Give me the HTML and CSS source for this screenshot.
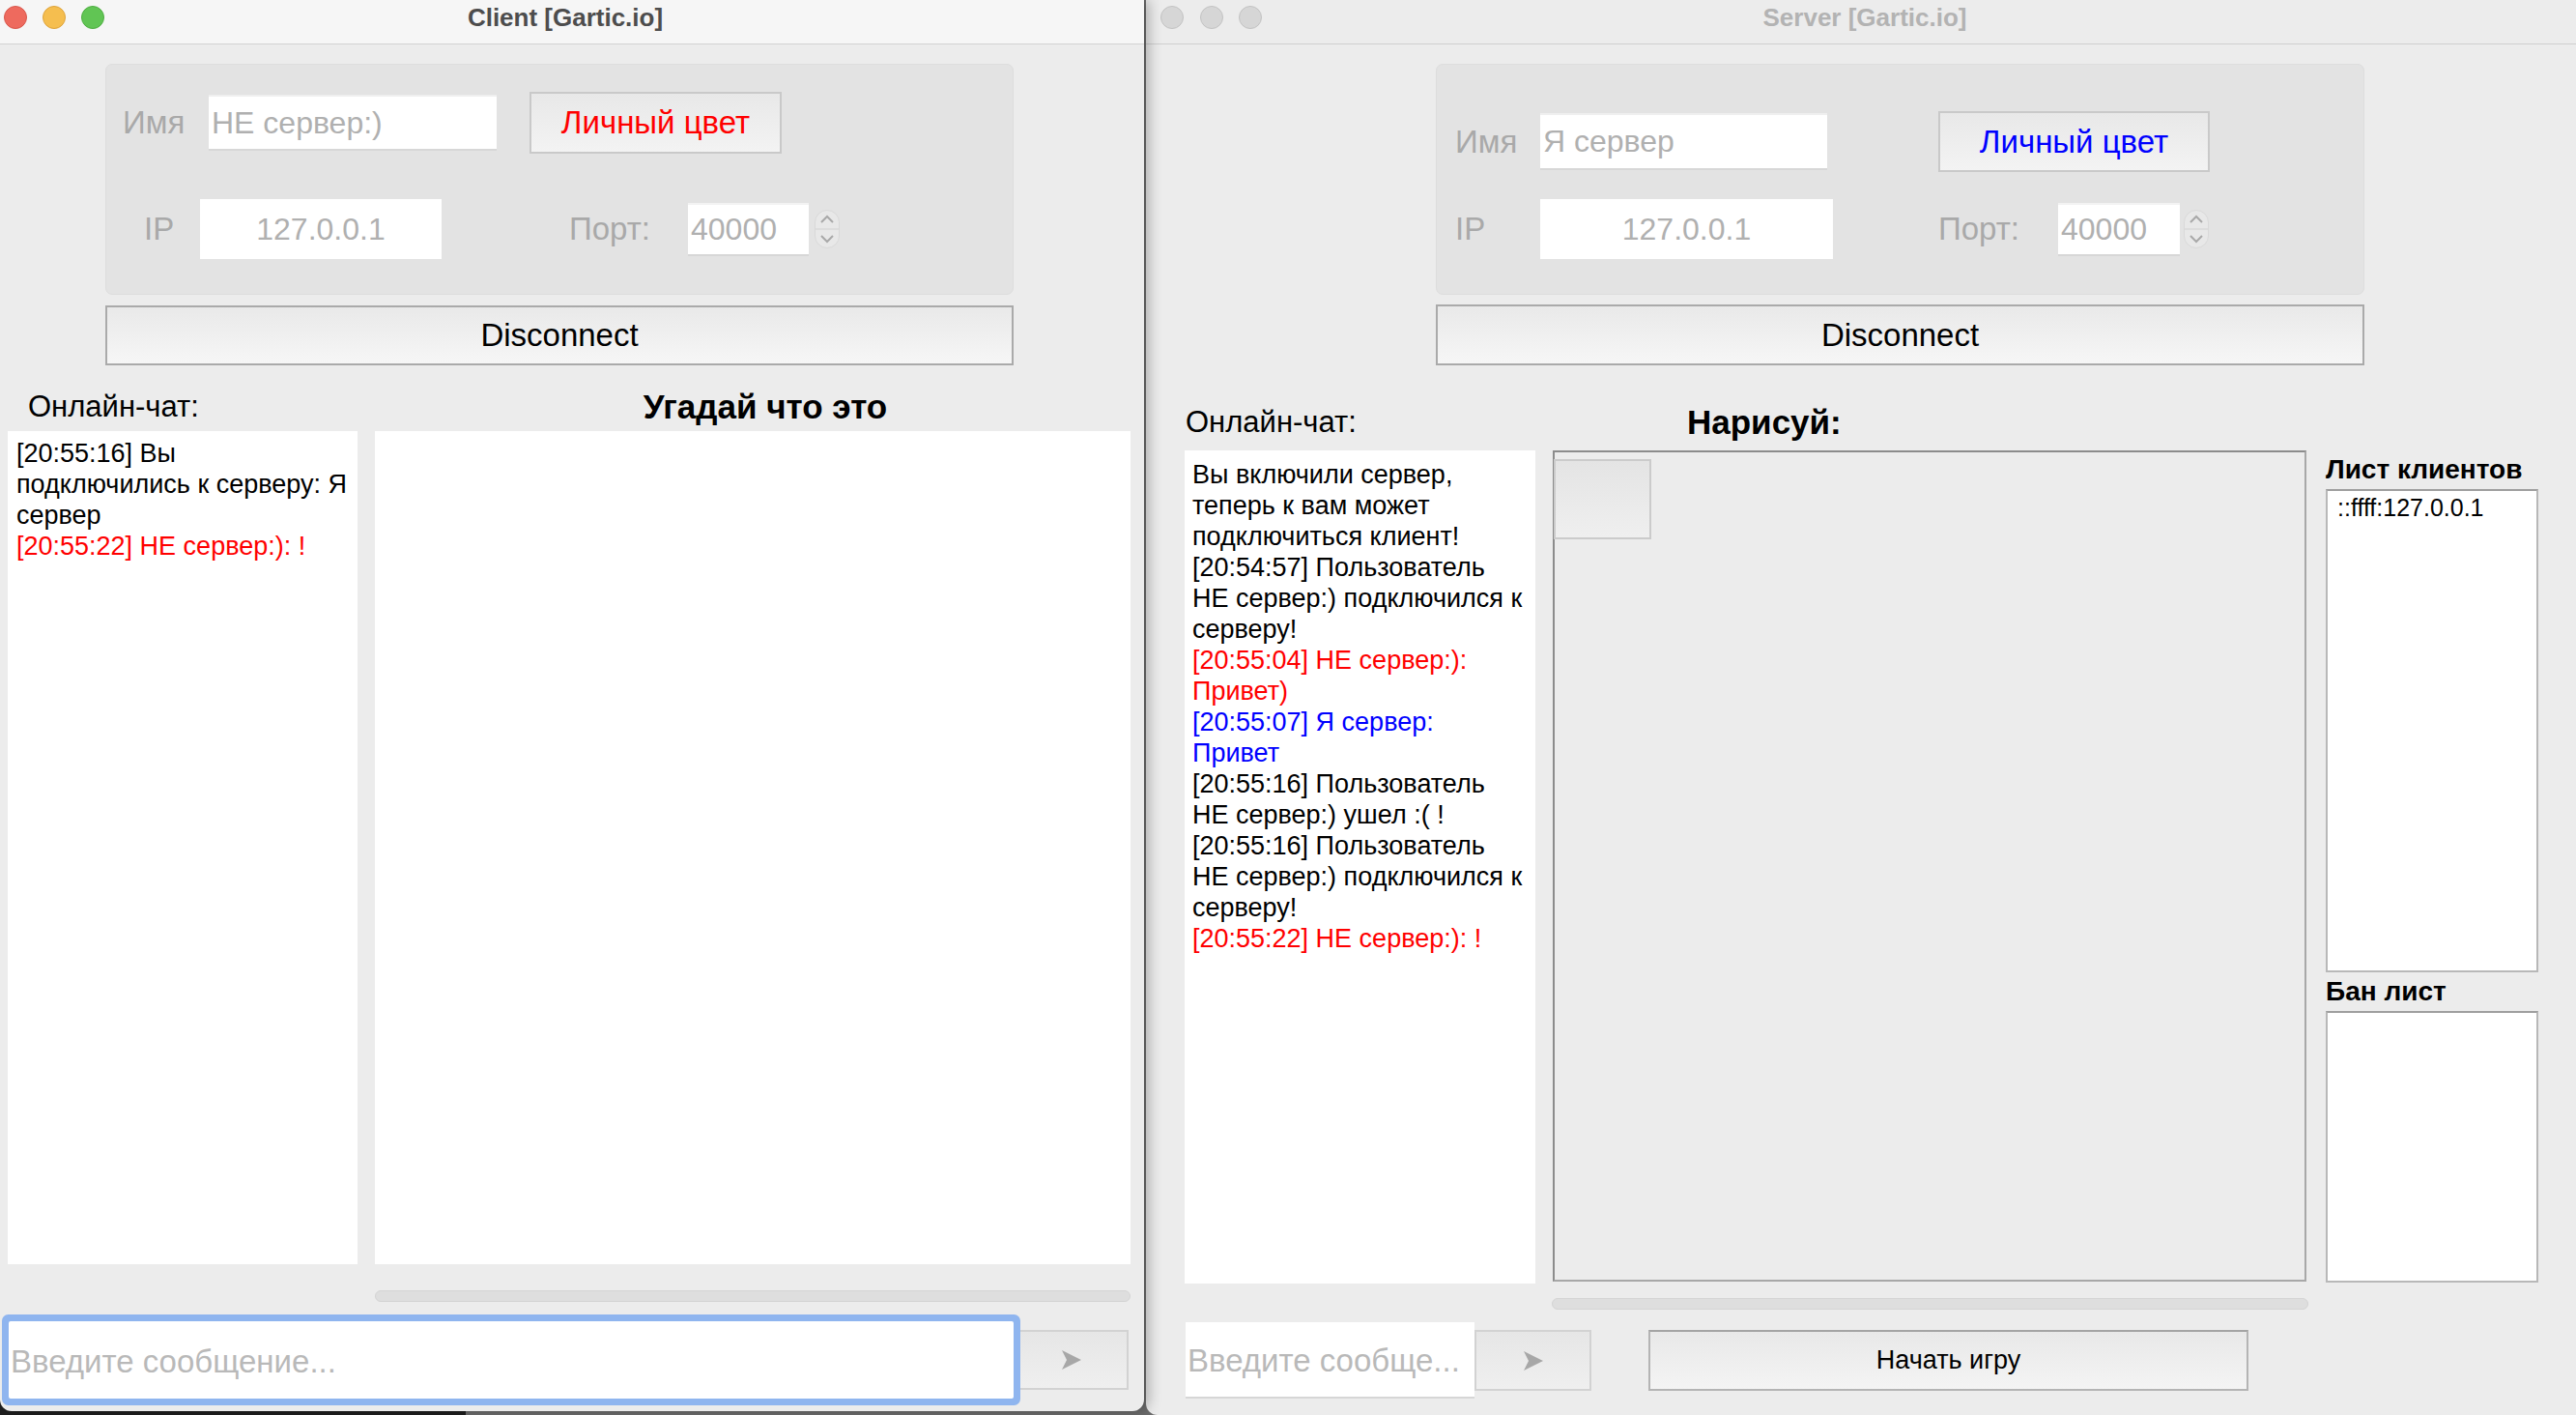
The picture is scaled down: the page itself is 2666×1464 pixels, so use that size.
FILE: index.html
```html
<!DOCTYPE html>
<html lang="ru">
<head>
<meta charset="utf-8">
<title>Gartic.io</title>
<link rel="stylesheet" href="styles.css">
</head>
<body>
<div class="desk">
  <div class="win win-client">
    <div class="titlebar active">
      <div class="lights client-lights"><span class="light red"></span><span class="light yellow"></span><span class="light green"></span></div>
      <div class="title client-title">Client [Gartic.io]</div>
    </div>
    <div class="settings c-settings">
      <div class="srow c-row1">
        <span class="lbl c-lbl1">Имя</span>
        <div class="field name-field c-name">НЕ сервер:)</div>
        <div class="btn color-btn c-color red-text">Личный цвет</div>
      </div>
      <div class="srow c-row2">
        <span class="lbl c-lbl-ip">IP</span>
        <div class="field ip-field c-ip">127.0.0.1</div>
        <span class="lbl c-lbl-port">Порт:</span>
        <div class="field port-field c-port">40000</div>
        <svg class="spin c-spin" width="26" height="40" viewBox="0 0 26 40"><rect x="0.5" y="0.5" width="25" height="39" rx="12.5" fill="#e8e8e8" stroke="#d9d9d9"/><line x1="1" y1="20" x2="25" y2="20" stroke="#d2d2d2"/><path d="M7 13 L13 7 L19 13" fill="none" stroke="#a9a9a9" stroke-width="2"/><path d="M7 27 L13 33 L19 27" fill="none" stroke="#a9a9a9" stroke-width="2"/></svg>
      </div>
    </div>
    <div class="btn disc c-disc">Disconnect</div>
    <div class="heads c-heads">
      <div class="h-chat c-hchat">Онлайн-чат:</div>
      <div class="h-draw c-hdraw">Угадай что это</div>
    </div>
    <div class="panes c-panes">
      <div class="chat c-chat">
        <div>[20:55:16] Вы<br>подключились к серверу: Я<br>сервер</div>
        <div class="red-text">[20:55:22] НЕ сервер:): !</div>
      </div>
      <div class="board"></div>
    </div>
    <div class="hscroll c-hscroll"></div>
    <div class="sendrow c-sendrow">
      <div class="msg c-msg">Введите сообщение...</div>
      <div class="btn send c-send"><svg width="22" height="22" viewBox="0 0 22 22"><path d="M1 1 L21 11 L1 21 L6 11 Z" fill="#a7a7a7"/></svg></div>
    </div>
  </div>

  <div class="win win-server">
    <div class="titlebar inactive">
      <div class="lights server-lights"><span class="light grey"></span><span class="light grey"></span><span class="light grey"></span></div>
      <div class="title server-title">Server [Gartic.io]</div>
    </div>
    <div class="settings s-settings">
      <div class="srow s-row1">
        <span class="lbl s-lbl">Имя</span>
        <div class="field name-field s-name">Я сервер</div>
        <div class="btn color-btn s-color blue-text">Личный цвет</div>
      </div>
      <div class="srow s-row2">
        <span class="lbl s-lbl">IP</span>
        <div class="field ip-field s-ip">127.0.0.1</div>
        <span class="lbl s-lbl-port">Порт:</span>
        <div class="field port-field s-port">40000</div>
        <svg class="spin s-spin" width="26" height="40" viewBox="0 0 26 40"><rect x="0.5" y="0.5" width="25" height="39" rx="12.5" fill="#e8e8e8" stroke="#d9d9d9"/><line x1="1" y1="20" x2="25" y2="20" stroke="#d2d2d2"/><path d="M7 13 L13 7 L19 13" fill="none" stroke="#a9a9a9" stroke-width="2"/><path d="M7 27 L13 33 L19 27" fill="none" stroke="#a9a9a9" stroke-width="2"/></svg>
      </div>
    </div>
    <div class="btn disc s-disc">Disconnect</div>
    <div class="heads s-heads">
      <div class="h-chat s-hchat">Онлайн-чат:</div>
      <div class="h-draw s-hdraw">Нарисуй:</div>
    </div>
    <div class="panes s-panes">
      <div class="chat s-chat">
        <div>Вы включили сервер,<br>теперь к вам может<br>подключиться клиент!</div>
        <div>[20:54:57] Пользователь<br>НЕ сервер:) подключился к<br>серверу!</div>
        <div class="red-text">[20:55:04] НЕ сервер:):<br>Привет)</div>
        <div class="blue-text">[20:55:07] Я сервер:<br>Привет</div>
        <div>[20:55:16] Пользователь<br>НЕ сервер:) ушел :( !</div>
        <div>[20:55:16] Пользователь<br>НЕ сервер:) подключился к<br>серверу!</div>
        <div class="red-text">[20:55:22] НЕ сервер:): !</div>
      </div>
      <div class="canvas">
        <div class="tool-btn"></div>
      </div>
      <div class="lists">
        <div class="list-h">Лист клиентов</div>
        <div class="listbox clients">
          <div class="list-item">::ffff:127.0.0.1</div>
        </div>
        <div class="list-h">Бан лист</div>
        <div class="listbox bans"></div>
      </div>
    </div>
    <div class="hscroll s-hscroll"></div>
    <div class="sendrow s-sendrow">
      <div class="msg s-msg">Введите сообще...</div>
      <div class="btn send s-send"><svg width="22" height="22" viewBox="0 0 22 22"><path d="M1 1 L21 11 L1 21 L6 11 Z" fill="#a7a7a7"/></svg></div>
      <div class="btn start">Начать игру</div>
    </div>
  </div>
</div>
</body>
</html>
```
FILE: styles.css
```css
* { box-sizing: border-box; margin: 0; padding: 0; }

html, body { width: 2666px; height: 1464px; overflow: hidden; }

body {
  font-family: "Liberation Sans", Arial, Helvetica, sans-serif;
  color: #000;
  background: linear-gradient(to right, #1f1f1f 0, #1f1f1f 482px, #6c6c6c 482px);
}

.desk { display: flex; height: 1464px; }

.win {
  display: flex;
  flex-direction: column;
  background: #ececec;
  overflow: hidden;
  flex-shrink: 0;
}

.win-client {
  width: 1184px;
  height: 1460px;
  border-radius: 0 0 12px 12px;
  position: relative;
  z-index: 2;
  box-shadow: 5px 0 14px rgba(0, 0, 0, 0.28);
}

.win-server {
  width: 1480px;
  height: 1464px;
  margin-left: 2px;
  border-radius: 0 0 0 12px;
}

/* title bar */
.titlebar {
  height: 46px;
  flex-shrink: 0;
  display: grid;
  align-items: center;
  padding-bottom: 9px;
  border-bottom: 1px solid #d3d3d3;
}
.titlebar > * { grid-area: 1 / 1; }
.active { background: #f6f6f6; }
.inactive { background: #ececec; border-bottom-color: #cfcfcf; }

.lights { display: flex; gap: 16px; justify-self: start; }
.client-lights { padding-left: 4px; }
.server-lights { padding-left: 15px; gap: 16.5px; }
.light { width: 24px; height: 24px; border-radius: 50%; display: block; }
.red { background: #ee6a5e; border: 1px solid #d9574c; }
.yellow { background: #f5be4f; border: 1px solid #dea33a; }
.green { background: #61c554; border: 1px solid #4eae41; }
.grey { background: #d6d6d6; border: 1px solid #c3c3c3; }

.title { justify-self: center; font-size: 26px; font-weight: bold; }
.client-title { color: #4d4d4d; padding-right: 14px; }
.server-title { color: #b3b3b3; padding-left: 8px; }

/* settings group */
.settings {
  background: #e3e3e3;
  border: 1px solid #dddddd;
  border-radius: 7px;
  margin-top: 20px;
  height: 239px;
  flex-shrink: 0;
}
.c-settings { margin-left: 109px; width: 940px; padding-top: 28px; }
.s-settings { margin-left: 300px; width: 961px; padding-top: 48px; }

.srow { display: flex; align-items: center; }
.c-row1 { height: 64px; padding-left: 17px; }
.c-row2 { height: 62px; margin-top: 47px; padding-left: 39px; }
.s-row1 { height: 63px; padding-left: 19px; }
.s-row2 { height: 62px; margin-top: 28px; padding-left: 19px; }

.lbl { font-size: 33px; color: #a9a9a9; flex-shrink: 0; }
.c-lbl1 { width: 89px; }
.c-lbl-ip { width: 58px; }
.c-lbl-port { width: 123px; margin-left: 132px; }
.s-lbl { width: 88px; }
.s-lbl-port { width: 124px; margin-left: 109px; }

.field {
  background: #fff;
  font-size: 32px;
  color: #b0b0b0;
  display: flex;
  align-items: center;
  flex-shrink: 0;
}
.name-field {
  height: 58px;
  padding-left: 3px;
  border-top: 2px solid #efefef;
  border-bottom: 2px solid #d7d7d7;
}
.c-name { width: 298px; }
.s-name { width: 297px; height: 59px; }
.ip-field { height: 62px; justify-content: center; }
.c-ip { width: 250px; }
.s-ip { width: 303px; }
.port-field {
  height: 55px;
  padding-left: 3px;
  border-bottom: 2px solid #d7d7d7;
  border-top: 2px solid #f3f3f3;
}
.c-port { width: 125px; }
.s-port { width: 126px; }
.spin { flex-shrink: 0; display: block; }
.c-spin { margin-left: 6px; }
.s-spin { margin-left: 4px; }

.btn {
  display: flex;
  align-items: center;
  justify-content: center;
  background: linear-gradient(#e8e8e8, #f3f3f3);
  border: 2px solid #c9c9c9;
  flex-shrink: 0;
}
.color-btn { font-size: 33px; }
.c-color { width: 261px; height: 64px; margin-left: 34px; }
.s-color { width: 281px; height: 63px; margin-left: 115px; }
.red-text { color: #ff0000; }
.blue-text { color: #0000ff; }

.disc {
  height: 62px;
  font-size: 33px;
  border: 2px solid #aaaaaa;
  background: linear-gradient(#e9e9e9, #f6f6f6);
}
.c-disc { margin-top: 11px; margin-left: 109px; width: 940px; }
.s-disc { margin-top: 10px; margin-left: 300px; width: 961px; height: 63px; }

/* headings */
.heads { display: flex; line-height: 50px; flex-shrink: 0; }
.c-heads { height: 68px; padding-top: 18px; }
.s-heads { height: 88px; padding-top: 34px; }
.h-chat { font-size: 31px; flex-shrink: 0; }
.h-draw { font-size: 35px; font-weight: bold; }
.c-hchat { width: 388px; padding-left: 29px; }
.c-hdraw { width: 782px; text-align: center; padding-left: 26px; }
.s-hchat { width: 560px; padding-left: 41px; }

/* panes */
.panes { display: flex; flex-shrink: 0; }
.c-panes { height: 862px; padding-left: 8px; gap: 18px; }
.s-panes { height: 862px; padding-left: 40px; }

.chat {
  background: #fff;
  font-size: 27px;
  line-height: 32px;
  white-space: nowrap;
  padding: 7px 9px;
  flex-shrink: 0;
}
.c-chat { width: 362px; }
.s-chat { width: 363px; padding-left: 8px; padding-top: 9px; }

.board { background: #fff; width: 782px; }

.canvas {
  width: 780px;
  height: 860px;
  margin-left: 18px;
  border: 2px solid #a8a8a8;
  border-top-color: #8c8c8c;
  border-left-color: #8c8c8c;
  background: #ececec;
  padding-top: 7px;
  flex-shrink: 0;
}
.tool-btn {
  width: 101px;
  height: 83px;
  margin-left: -1px;
  border: 2px solid #cbcbcb;
  background: linear-gradient(#e4e4e4, #efefef);
}

.lists { width: 220px; margin-left: 20px; display: flex; flex-direction: column; }
.list-h { height: 40px; line-height: 40px; font-size: 28px; font-weight: bold; }
.listbox {
  background: #fff;
  border: 2px solid #b8b8b8;
  border-top-color: #9f9f9f;
}
.clients { height: 500px; }
.bans { height: 281px; }
.list-item { font-size: 25px; line-height: 28px; padding: 3px 0 0 10px; }

/* scroll bars */
.hscroll {
  height: 12px;
  border-radius: 6px;
  background: #dedede;
  border: 1px solid #d4d4d4;
  flex-shrink: 0;
}
.c-hscroll { margin-top: 27px; margin-left: 388px; width: 782px; }
.s-hscroll { margin-top: 15px; margin-left: 420px; width: 783px; }

/* send row */
.sendrow { display: flex; align-items: center; flex-shrink: 0; }
.c-sendrow { margin-top: 20px; height: 80px; padding-left: 9px; }
.s-sendrow { margin-top: 13px; height: 79px; padding-left: 41px; }

.msg {
  background: #fff;
  font-size: 33px;
  color: #b9b9b9;
  display: flex;
  align-items: center;
  flex-shrink: 0;
}
.c-msg {
  width: 1040px;
  height: 80px;
  padding-left: 2px;
  padding-top: 4px;
  position: relative;
  z-index: 1;
  border-radius: 2px;
  box-shadow: 0 0 0 7px #8fb5ef;
}
.s-msg {
  width: 299px;
  height: 79px;
  padding-left: 2px;
  padding-top: 2px;
  border-bottom: 2px solid #d6d6d6;
}

.send {
  height: 62px;
  border: 2px solid #d2d2d2;
  background: linear-gradient(#e6e6e6, #efefef);
}
.send svg { display: block; }
.c-send { width: 119px; }
.s-send { width: 121px; height: 63px; }

.start {
  width: 621px;
  height: 63px;
  margin-left: 59px;
  font-size: 27px;
  border: 2px solid #b4b4b4;
  border-top-color: #a4a4a4;
  background: linear-gradient(#e8e8e8, #f4f4f4);
}
```
